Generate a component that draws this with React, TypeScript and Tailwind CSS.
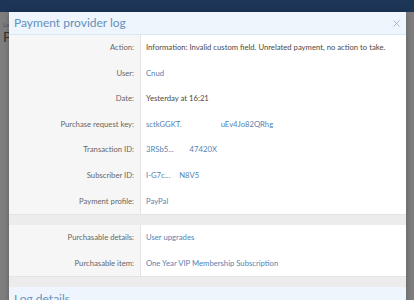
import { X } from 'lucide-react'

type Row = { label: string; value: React.ReactNode; link?: boolean }

const font = { fontFamily: 'Lato, "Open Sans", sans-serif' }

function Redacted({ a, gap, b }: { a: string; gap: number; b: string }) {
  return (
    <span className="flex items-center">
      <span>{a}</span>
      <span style={{ width: gap }} className="inline-block" />
      <span>{b}</span>
    </span>
  )
}

const mainRows: Row[] = [
  { label: 'Action:', value: 'Information: Invalid custom field. Unrelated payment, no action to take.' },
  { label: 'User:', value: 'Cnud', link: true },
  { label: 'Date:', value: 'Yesterday at 16:21' },
  { label: 'Purchase request key:', value: <Redacted a="sctkGGKT." gap={39} b="uEv4Jo82QRhg" />, link: true },
  { label: 'Transaction ID:', value: <Redacted a="3RSb5..." gap={16} b="47420X" />, link: true },
  { label: 'Subscriber ID:', value: <Redacted a="I-G7c..." gap={9} b="N8V5" />, link: true },
  { label: 'Payment profile:', value: 'PayPal', link: true },
]

const itemRows: Row[] = [
  { label: 'Purchasable details:', value: 'User upgrades', link: true },
  { label: 'Purchasable item:', value: 'One Year VIP Membership Subscription', link: true },
]

function InfoRow({ row }: { row: Row }) {
  return (
    <div className="flex h-[25.6px] whitespace-nowrap text-[7.7px]">
      <div className="flex w-[132px] shrink-0 items-center justify-end border-r border-[#e4e4e4] bg-[#f6f6f6] pr-[6px] text-[#666]">
        {row.label}
      </div>
      <div className={`flex items-center pl-[5px] ${row.link ? 'text-[#5682b0]' : 'text-[#4a4a4a]'}`}>
        {row.value}
      </div>
    </div>
  )
}

export default function App() {
  return (
    <div className="relative h-[300px] w-[414px] overflow-hidden bg-[#7e7e7e]" style={font}>
      <div className="h-[12px] bg-[#1d3557]" />
      <div className="px-[3px] pt-[8px] text-[6px] text-[#555]">Lo</div>
      <div className="px-[3px] text-[14px] leading-[16px] text-[#333]">P</div>

      <div className="absolute left-[9px] top-[12px] w-[397px] bg-white shadow-[0_0_6px_rgba(0,0,0,0.25)]">
        <div className="flex h-[23px] items-center justify-between border-b border-[#dde8f2] bg-[#eef5fc] pl-[5px] pr-[4px]">
          <span className="text-[12px] leading-[16px] text-[#6790bb]">Payment provider log</span>
          <X size={11} strokeWidth={1.7} className="text-[#92abc6]" />
        </div>
        {mainRows.map((r) => (
          <InfoRow key={r.label} row={r} />
        ))}
        <div className="h-[11px] border-t border-[#e4e4e4] bg-[#ececec]" />
        {itemRows.map((r) => (
          <InfoRow key={r.label} row={r} />
        ))}
        <div className="h-[11px] border-t border-[#e4e4e4] bg-[#ececec]" />
        <div className="flex h-[24px] items-start bg-[#eef5fc] pl-[5px] pt-[4px]">
          <span className="text-[12px] leading-[16px] text-[#6790bb]">Log details</span>
        </div>
      </div>
    </div>
  )
}
